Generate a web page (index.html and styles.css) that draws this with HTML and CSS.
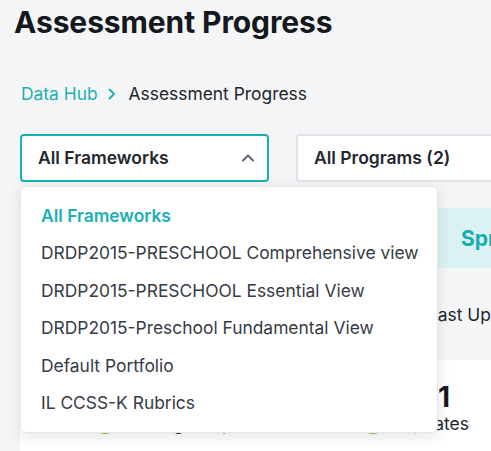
FILE: index.html
```html
<!DOCTYPE html>
<html lang="en">
<head>
<meta charset="utf-8">
<title>Assessment Progress</title>
<link rel="stylesheet" href="styles.css">
</head>
<body>
<div class="page">
  <h1 class="title">Assessment Progress</h1>
  <nav class="crumbs">
    <a class="crumb-link" href="#">Data Hub</a>
    <svg class="crumb-sep" width="8" height="12" viewBox="0 0 8 12"><polyline points="1.5,1.5 6,6 1.5,10.5" fill="none" stroke="currentColor" stroke-width="1.8" stroke-linecap="round" stroke-linejoin="round"/></svg>
    <span class="crumb-current">Assessment Progress</span>
  </nav>
  <div class="filters">
    <div class="select-wrap">
      <div class="select select-open">
        <span>All Frameworks</span>
        <svg class="select-caret" width="12" height="8" viewBox="0 0 12 8"><polyline points="1,6.5 6,1.5 11,6.5" fill="none" stroke="currentColor" stroke-width="2" stroke-linecap="round" stroke-linejoin="round"/></svg>
      </div>
      <ul class="menu">
        <li class="menu-item menu-item-active">All Frameworks</li>
        <li class="menu-item">DRDP2015-PRESCHOOL Comprehensive view</li>
        <li class="menu-item">DRDP2015-PRESCHOOL Essential View</li>
        <li class="menu-item">DRDP2015-Preschool Fundamental View</li>
        <li class="menu-item">Default Portfolio</li>
        <li class="menu-item">IL CCSS-K Rubrics</li>
      </ul>
    </div>
    <div class="select select-wide"><span>All Programs (2)</span></div>
  </div>
  <div class="banner"><span class="season">Spring 2024</span></div>
  <div class="updated">Last Updated: 04/12/2024</div>
  <div class="card">
    <div class="stat stat-left">
      <div class="stat-num">12</div>
      <div class="stat-label"><span class="dot"></span><span>Rating Entry</span></div>
    </div>
    <div class="stat stat-right">
      <div class="stat-num">1</div>
      <div class="stat-label"><span class="dot"></span><span>Updates</span></div>
    </div>
  </div>
</div>
</body>
</html>
```
FILE: styles.css
```css
html, body {
  margin: 0;
  padding: 0;
  overflow: hidden;
  background: #f4f5f7;
}
body {
  font-family: Inter, "Noto Sans", sans-serif;
  color: #1b1f24;
  width: 491px;
  height: 451px;
}
.page {
  width: 720px;
  padding: 0 0 0 20px;
}
.title {
  margin: 4px 0 0 -6px;
  font-size: 30px;
  line-height: 36px;
  font-weight: 700;
  color: #15191e;
  letter-spacing: -0.1px;
}
.crumbs {
  margin-top: 42px;
  display: flex;
  align-items: center;
  font-size: 17.4px;
  line-height: 24px;
}
.crumb-link {
  color: #1cb0b4;
  text-decoration: none;
  margin-left: 1px;
}
.crumb-sep {
  color: #1cb0b4;
  margin: 0 13px 0 10px;
}
.crumb-current {
  color: #22262c;
}
.filters {
  margin-top: 28px;
  display: flex;
  gap: 27px;
}
.select-wrap {
  position: relative;
}
.select {
  box-sizing: border-box;
  height: 48px;
  width: 249px;
  display: flex;
  align-items: center;
  justify-content: space-between;
  padding: 0 13px 1px 16px;
  background: #fff;
  border: 2px solid #e0e2e7;
  border-radius: 4px;
  font-size: 17.5px;
  font-weight: 600;
  color: #23272e;
}
.select-open {
  border-color: #17b0b4;
}
.select-wide {
  width: 320px;
}
.select-caret {
  color: #5d6270;
}
.menu {
  position: absolute;
  top: 52px;
  left: 0;
  width: 418px;
  box-sizing: border-box;
  margin: 0;
  padding: 10px 0;
  list-style: none;
  background: #fff;
  border: 1px solid #e4e6ea;
  border-radius: 6px;
  box-shadow: 0 4px 14px rgba(30, 40, 60, 0.12);
  z-index: 2;
}
.menu-item {
  padding: 7.75px 20px;
  font-size: 17.4px;
  line-height: 22px;
  color: #363b44;
  white-space: nowrap;
}
.menu-item-active {
  color: #1cb0b4;
  font-weight: 600;
}
.banner {
  margin-top: 26px;
  height: 60px;
  background: #dcf2f2;
  display: flex;
  align-items: center;
  padding-left: 441px;
}
.season {
  color: #17aeb2;
  font-size: 21px;
  font-weight: 700;
}
.updated {
  margin-top: 35px;
  padding-left: 408px;
  font-size: 17.4px;
  line-height: 24px;
  color: #22262c;
}
.card {
  margin-top: 33px;
  height: 120px;
  background: #fff;
  display: flex;
  padding-top: 22px;
  box-sizing: border-box;
}
.stat {
  display: flex;
  flex-direction: column;
  align-items: flex-start;
}
.stat-left {
  margin-left: 73px;
  width: 200px;
}
.stat-right {
  margin-left: 68px;
  width: 140px;
}
.stat-num {
  font-size: 28px;
  line-height: 30px;
  font-weight: 700;
  color: #15191e;
  margin-left: 77px;
}
.stat-label {
  display: flex;
  align-items: center;
  gap: 15px;
  font-size: 17.4px;
  line-height: 24px;
  color: #22262c;
}
.dot {
  width: 24px;
  height: 24px;
  border-radius: 50%;
  background: #8cc63f;
  margin-top: -4px;
}
```
